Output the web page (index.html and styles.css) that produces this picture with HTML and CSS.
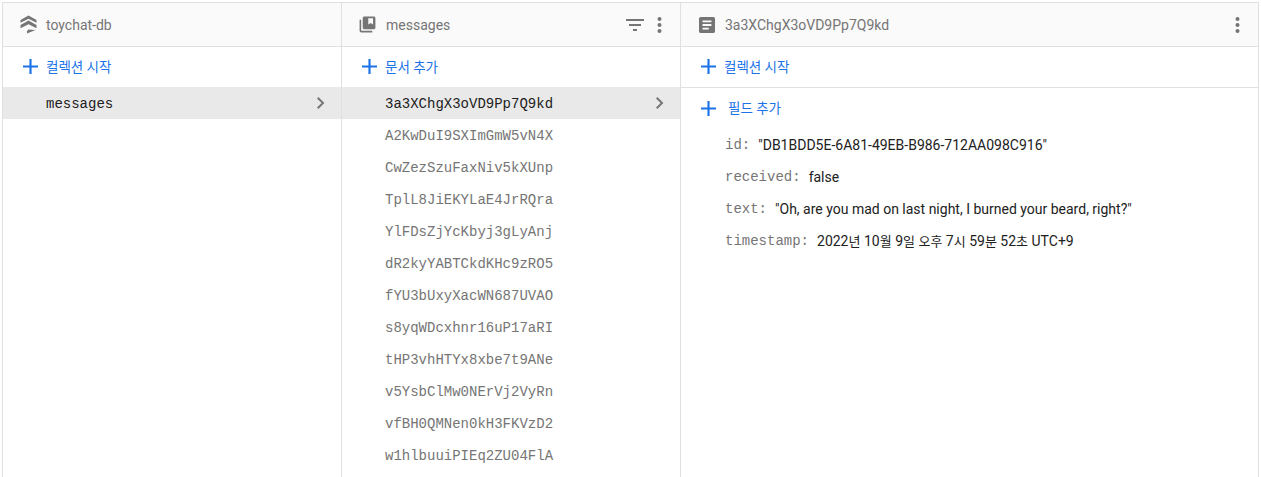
FILE: index.html
```html
<!DOCTYPE html>
<html lang="ko">
<head>
<meta charset="utf-8">
<title>Firestore</title>
<link rel="stylesheet" href="styles.css">
</head>
<body>
<main class="panel">
  <section class="col col-root">
    <header class="col-head">
      <svg class="head-icon" viewBox="0 0 19 19"><path d="M9.500.5 1.500 5v2.800l8-4 8 4V5z"/><path d="M9.500 5.500 1.500 10v3.200l8-4 8 4V10z"/><path d="M8 18.500V16l1.500-1.500 7 .5z"/></svg>
      <span class="head-title">toychat-db</span>
    </header>
    <div class="action">
      <svg class="plus" viewBox="0 0 14 14"><path d="M6 0h2v6h6v2H8v6H6V8H0V6h6z"/></svg>
      <span class="action-label">컬렉션 시작</span>
    </div>
    <div class="row selected">
      <span class="row-text">messages</span>
      <svg class="chev" viewBox="0 0 8 12"><path d="M1.400 0 0 1.400 4.600 6 0 10.600 1.400 12l6-6z"/></svg>
    </div>
  </section>
  <section class="col col-docs">
    <header class="col-head">
      <svg class="head-icon" viewBox="0 0 24 24"><path d="M4 6H2v14c0 1.100.9 2 2 2h14v-2H4z"/><path d="M20 2H8c-1.100 0-2 .9-2 2v12c0 1.100.9 2 2 2h12c1.100 0 2-.9 2-2V4c0-1.100-.9-2-2-2zm-1 10-3-2-3 2V4h6z" fill-rule="evenodd"/></svg>
      <span class="head-title">messages</span>
      <span class="head-tools">
        <svg class="filter" viewBox="0 0 18 12"><path d="M0 0h18v2H0zM3 5h12v2H3zM7 10h4v2H7z"/></svg>
        <svg class="dots" viewBox="0 0 4 16"><circle cx="2" cy="2" r="2"/><circle cx="2" cy="8" r="2"/><circle cx="2" cy="14" r="2"/></svg>
      </span>
    </header>
    <div class="action">
      <svg class="plus" viewBox="0 0 14 14"><path d="M6 0h2v6h6v2H8v6H6V8H0V6h6z"/></svg>
      <span class="action-label">문서 추가</span>
    </div>
    <div class="row selected">
      <span class="row-text">3a3XChgX3oVD9Pp7Q9kd</span>
      <svg class="chev" viewBox="0 0 8 12"><path d="M1.400 0 0 1.400 4.600 6 0 10.600 1.400 12l6-6z"/></svg>
    </div>
    <div class="row"><span class="row-text">A2KwDuI9SXImGmW5vN4X</span></div>
    <div class="row"><span class="row-text">CwZezSzuFaxNiv5kXUnp</span></div>
    <div class="row"><span class="row-text">TplL8JiEKYLaE4JrRQra</span></div>
    <div class="row"><span class="row-text">YlFDsZjYcKbyj3gLyAnj</span></div>
    <div class="row"><span class="row-text">dR2kyYABTCkdKHc9zRO5</span></div>
    <div class="row"><span class="row-text">fYU3bUxyXacWN687UVAO</span></div>
    <div class="row"><span class="row-text">s8yqWDcxhnr16uP17aRI</span></div>
    <div class="row"><span class="row-text">tHP3vhHTYx8xbe7t9ANe</span></div>
    <div class="row"><span class="row-text">v5YsbClMw0NErVj2VyRn</span></div>
    <div class="row"><span class="row-text">vfBH0QMNen0kH3FKVzD2</span></div>
    <div class="row"><span class="row-text">w1hlbuuiPIEq2ZU04FlA</span></div>
  </section>
  <section class="col col-fields">
    <header class="col-head">
      <svg class="head-icon doc" viewBox="0 0 18 18"><path fill-rule="evenodd" d="M16 0H2C.9 0 0 .9 0 2v14c0 1.100.9 2 2 2h14c1.100 0 2-.9 2-2V2c0-1.100-.9-2-2-2zM4 4h10v2H4zm0 4h10v2H4zm0 4h7v2H4z"/></svg>
      <span class="head-title">3a3XChgX3oVD9Pp7Q9kd</span>
      <span class="head-tools">
        <svg class="dots" viewBox="0 0 4 16"><circle cx="2" cy="2" r="2"/><circle cx="2" cy="8" r="2"/><circle cx="2" cy="14" r="2"/></svg>
      </span>
    </header>
    <div class="action action-ruled">
      <svg class="plus" viewBox="0 0 14 14"><path d="M6 0h2v6h6v2H8v6H6V8H0V6h6z"/></svg>
      <span class="action-label">컬렉션 시작</span>
    </div>
    <div class="action action-field">
      <svg class="plus" viewBox="0 0 14 14"><path d="M6 0h2v6h6v2H8v6H6V8H0V6h6z"/></svg>
      <span class="action-label">필드 추가</span>
    </div>
    <dl class="fields">
      <div class="field"><dt>id:</dt><dd>"DB1BDD5E-6A81-49EB-B986-712AA098C916"</dd></div>
      <div class="field"><dt>received:</dt><dd>false</dd></div>
      <div class="field"><dt>text:</dt><dd>"Oh, are you mad on last night, I burned your beard, right?"</dd></div>
      <div class="field"><dt>timestamp:</dt><dd>2022<span class="cjk">년</span> 10<span class="cjk">월</span> 9<span class="cjk">일</span> <span class="cjk">오후</span> 7<span class="cjk">시</span> 59<span class="cjk">분</span> 52<span class="cjk">초</span> UTC+9</dd></div>
    </dl>
  </section>
</main>
</body>
</html>
```
FILE: styles.css
```css
* { box-sizing: border-box; }
html, body { margin: 0; height: 100%; overflow: hidden; background: #fff; }
body { padding: 2px 2px 0 2px; font-family: Roboto, "Noto Sans CJK KR", sans-serif; }
.panel {
  display: flex;
  width: 1257px;
  height: 475px;
  border-top: 1px solid #e0e0e0;
  border-left: 1px solid #e0e0e0;
  border-right: 1px solid #e0e0e0;
}
.col { flex: none; border-right: 1px solid #e0e0e0; }
.col-root { width: 339px; }
.col-docs { width: 339px; }
.col-fields { flex: 1; border-right: 0; }
.col-head {
  display: flex;
  align-items: center;
  height: 44px;
  padding: 0 12px 0 16px;
  background: #fafafa;
  border-bottom: 1px solid #e0e0e0;
}
.head-icon { width: 19px; height: 19px; fill: #757575; flex: none; margin-right: 8px; }
.head-icon.doc { width: 16px; height: 16px; margin: 0 10px 0 2px; }
.col-docs .head-icon { margin-right: 9px; }
.head-title { font-size: 14px; color: #757575; }
.head-tools { margin-left: auto; display: flex; align-items: center; gap: 13px; margin-right: 6px; }
.filter { width: 18px; height: 12px; fill: #757575; }
.dots { width: 5px; height: 16px; fill: #757575; }
.action {
  display: flex;
  align-items: center;
  height: 40px;
  padding: 0 0 1px 20px;
  color: #1a73e8;
  font-size: 13.500px;
}
.action-label { margin-top: -2px; }
.action-ruled { height: 41px; border-bottom: 1px solid #e0e0e0; }
.action-field { height: 40px; padding-bottom: 0; }
.action-field .action-label { margin-top: -3px; }
.plus { width: 15px; height: 15px; fill: #1a73e8; margin-right: 8px; flex: none; }
.action-field .plus { margin-right: 12px; }
.row {
  display: flex;
  align-items: center;
  justify-content: space-between;
  height: 32px;
  padding: 2px 16px 0 43px;
}
.row.selected { background: #e9e9e9; }
.row-text { font-family: "Liberation Mono", monospace; font-size: 14px; color: #757575; }
.selected .row-text { color: #212121; }
.chev { width: 8px; height: 12px; fill: #757575; margin-top: -2px; }
.fields { margin: 0; padding: 1px 0 0 44px; }
.field { display: flex; align-items: center; height: 32px; margin: 0; }
.field dt { font-family: "Liberation Mono", monospace; font-size: 14px; line-height: 20px; color: #757575; margin-right: 8px; }
.field dd { margin: 0; font-size: 14px; line-height: 20px; color: #212121; }
.cjk { font-size: 13px; line-height: 1; }
```
